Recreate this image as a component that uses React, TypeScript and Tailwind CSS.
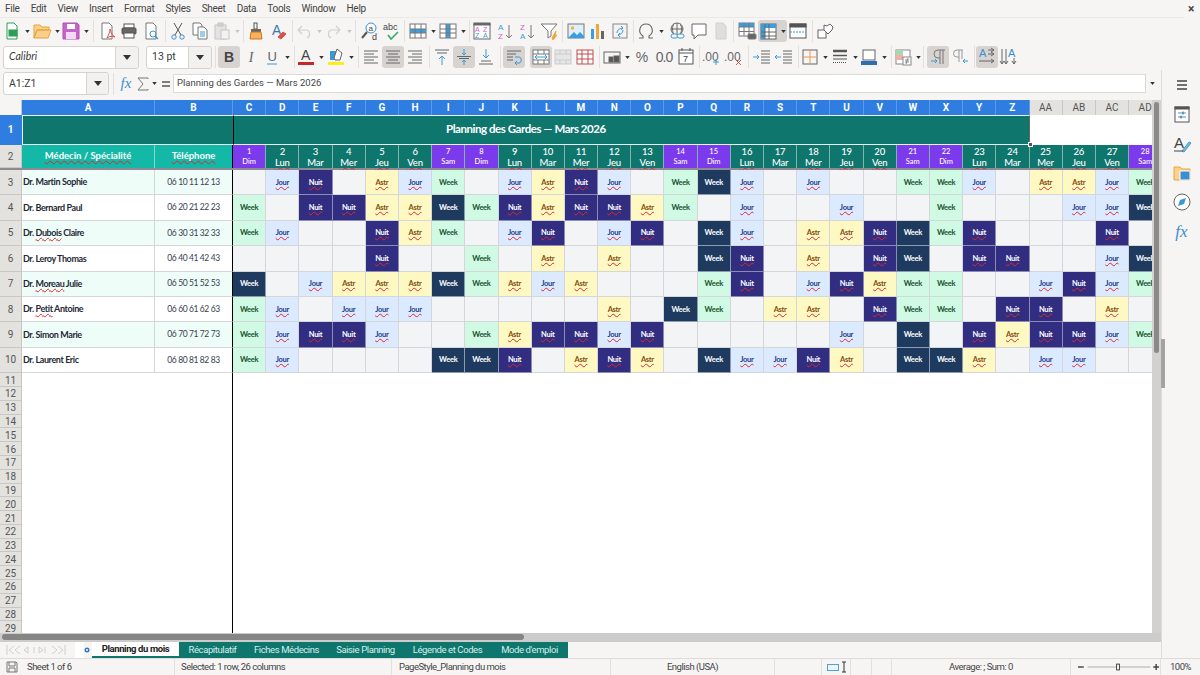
import React from "react";

const S = ({ children, c = "#555" }: { children?: React.ReactNode; c?: string }) => (
  <svg width="22" height="22" viewBox="0 0 22 22" fill="none" stroke={c} strokeWidth="1">{children}</svg>
);
const T = ({ x, y, s, f, w, children, i }: any) => (
  <text x={x} y={y} fontSize={s} fill={f} stroke="none" fontWeight={w} fontStyle={i ? "italic" : undefined} fontFamily="'Liberation Sans',sans-serif">{children}</text>
);
const B = ({ children, a, m }: { children?: React.ReactNode; a?: boolean; m?: string }) => (
  <div className={`w-[22px] h-[22px] shrink-0 rounded-[3px] flex items-center justify-center ${a ? "bg-[#d6d3d0]" : ""} ${m || ""}`}>{children}</div>
);
const D = ({ m, g }: { m?: string; g?: boolean }) => (
  <div className={`w-[8px] h-[22px] shrink-0 flex items-center justify-center ${m || ""}`}>
    <svg width="5" height="3" viewBox="0 0 6 4"><path d="M0 0h6L3 4z" fill={g ? "#c4c4c4" : "#333"} /></svg>
  </div>
);
const Sep = ({ m }: { m?: string }) => <div className={`w-px h-[22px] shrink-0 bg-[#e2e0dd] ${m || ""}`} />;

const doc = "M6 3h7l3 3v13H6z";
const Lines = ({ d }: { d: string }) => <path d={d} stroke="#666" />;

const Row1 = () => (
  <div className="h-[26px] flex items-center pl-px">
    <B><S c="#2e9e5b"><path d={doc} fill="#fff" /><rect x="8" y="10" width="8" height="6" fill="#2e9e5b" /></S></B><D />
    <B><S c="#e8a33d"><path d="M3 7V5h6l2 2h7v3H6l-3 8V7zM6 10h14l-3 8H3z" fill="#fbd08a" /></S></B><D m="-mr-px" />
    <B><S c="#b44fb8"><path d="M3 3h14l2 2v14H3z" fill="#c665c9" /><rect x="7" y="4" width="8" height="5" fill="#fff" stroke="none" /><rect x="6" y="12" width="10" height="7" fill="#f3d9f4" stroke="none" /></S></B><D />
    <Sep m="ml-[3px]" />
    <B m="ml-[2px]"><S c="#777"><path d={doc} fill="#fff" /><path d="M11 18c2-4 3-6 3-9 1 4 2 6 5 8-3-1-5-1-8 1z" stroke="#e0534a" /></S></B>
    <B><S c="#555"><rect x="6" y="4" width="10" height="4" fill="#fff" /><rect x="4" y="8" width="14" height="6" rx="1" fill="#666" /><rect x="6" y="13" width="10" height="5" fill="#fff" /></S></B>
    <B><S c="#777"><path d={doc} fill="#fff" /><circle cx="13" cy="14" r="3" stroke="#3b9ad6" /><path d="M15 16l3 3" stroke="#3b9ad6" strokeWidth="1.5" /></S></B>
    <Sep m="ml-[3px]" />
    <B m="ml-px"><S c="#3b8fd0"><circle cx="7" cy="17" r="2.2" /><circle cx="15" cy="17" r="2.2" /><path d="M8 15L15 3M14 15L7 3" stroke="#555" /></S></B>
    <B><S c="#777"><path d="M4 3h7l2 2v10H4z" fill="#fff" /><path d="M9 7h6l3 3v9H9z" fill="#fff" /><path d="M11 12h5M11 14h5M11 16h5" stroke="#3b9ad6" /></S></B>
    <B><S c="#c6c6c6"><rect x="4" y="5" width="11" height="14" fill="#e3e3e3" /><rect x="7" y="3" width="5" height="3" fill="#d0d0d0" /><rect x="10" y="10" width="8" height="9" fill="#f2f2f2" /></S></B><D g />
    <Sep m="ml-[2px]" />
    <B m="ml-px"><S c="#c9772a"><rect x="9" y="3" width="3" height="6" fill="#f5f5f5" stroke="#555" /><rect x="6" y="9" width="10" height="3" fill="#666" stroke="none" /><path d="M6 12h10l1 7H5z" fill="#f6b25c" /></S></B>
    <B><S><T x="5" y="15" s="14" f="#3a76b0" w="400">A</T><path d="M11 17l5-5 3 2-5 5z" fill="#e0504a" stroke="#e0504a" /></S></B>
    <Sep m="ml-[3px]" />
    <B><S c="#cfcfcf"><path d="M5 10l4-4M5 10l4 4M5 10h8c4 0 5 6 1 8" strokeWidth="1.2" /></S></B><D g />
    <B><S c="#cfcfcf"><path d="M17 10l-4-4M17 10l-4 4M17 10H9c-4 0-5 6-1 8" strokeWidth="1.2" /></S></B><D g />
    <Sep m="ml-[2px]" />
    <B m="ml-[3px]"><S><circle cx="12" cy="8" r="5" fill="#fff" stroke="#3b8fd0" /><T x="9.5" y="11" s="8" f="#444">a</T><path d="M8 12l-5 6" strokeWidth="2" /><T x="13" y="20" s="9" f="#444">d</T></S></B>
    <B><S><T x="2" y="10" s="9" f="#444">abc</T><path d="M7 15l3 4 7-7" stroke="#35a868" strokeWidth="1.5" /></S></B>
    <Sep m="ml-px" />
    <B m="ml-[2px]"><S c="#777"><rect x="3" y="4" width="16" height="14" fill="#fff" /><rect x="3" y="9" width="16" height="4" fill="#3b9ee0" stroke="none" /><path d="M3 9h16M3 13h16M8 4v14M14 4v14" /></S></B><D />
    <B><S c="#777"><rect x="3" y="4" width="16" height="14" fill="#fff" /><rect x="9" y="4" width="4" height="14" fill="#3b9ee0" stroke="none" /><path d="M3 9h16M3 13h16M9 4v14M13 4v14" /></S></B><D />
    <Sep m="ml-[2px]" />
    <B m="ml-px"><S c="#666"><rect x="3" y="4" width="16" height="15" fill="#fff" /><rect x="3" y="3" width="16" height="2" fill="#666" /><T x="4" y="12" s="7" f="#d45bc9">A</T><T x="12" y="12" s="7" f="#d45bc9">Z</T><T x="4" y="18" s="7" f="#3b9ad6">Z</T><T x="12" y="18" s="7" f="#3b9ad6">A</T></S></B>
    <B m="ml-px"><S c="#777"><T x="4" y="10" s="8" f="#3b9ad6">A</T><T x="4" y="19" s="8" f="#d45bc9">Z</T><path d="M15 5v13M12 15l3 3 3-3" /></S></B>
    <B><S c="#777"><T x="4" y="10" s="8" f="#d45bc9">Z</T><T x="4" y="19" s="8" f="#3b9ad6">A</T><path d="M15 5v13M12 15l3 3 3-3" /></S></B>
    <B><S c="#777"><path d="M3 4h16l-6 7v5l-3 2v-7z" fill="#fff" /><path d="M14 18l4-7-1 5 2-1-4 5z" fill="#f0a63a" stroke="#f0a63a" /></S></B>
    <Sep m="ml-[2px]" />
    <B m="ml-[2px]"><S c="#777"><rect x="3" y="4" width="16" height="14" fill="#dff0fb" /><circle cx="7.5" cy="8" r="1.7" fill="#f5b048" stroke="none" /><path d="M3 18l6-6 3 3 3-3 4 4v2z" fill="#3b9ee0" stroke="none" /></S></B>
    <B><S><rect x="4" y="9" width="3" height="10" fill="#3b9ee0" stroke="none" /><rect x="9" y="4" width="3" height="15" fill="#f0a63a" stroke="none" /><rect x="14" y="11" width="3" height="8" fill="#666" stroke="none" /></S></B>
    <B><S c="#888"><rect x="4" y="4" width="14" height="14" fill="#f3f3f3" /><path d="M8 13c0-3 3-5 6-5M14 8l-2-2M14 8l-2 2M14 10c0 3-3 5-5 5M9 15l2-2M9 15l2 2" stroke="#3b9ad6" /></S></B>
    <Sep m="ml-[2px]" />
    <B m="ml-px"><S c="#666"><path d="M4 18h4v-2c-6-4-3-12 3-12s9 8 3 12v2h4" strokeWidth="1.1" /></S></B><D />
    <B m="ml-px"><S c="#666"><circle cx="11" cy="9" r="6" /><path d="M5 9h12M11 3v12M8 3.500c-2 3-2 8 0 11M14 3.500c2 3 2 8 0 11" /><rect x="5" y="14" width="7" height="4" rx="2" fill="#f6f5f4" stroke="#3b9ad6" /><rect x="11" y="14" width="7" height="4" rx="2" fill="#f6f5f4" stroke="#3b9ad6" /></S></B>
    <B><S c="#666"><path d="M4 4h14v11h-8l-4 4v-4H4z" fill="#fff" /></S></B>
    <B><S c="#d0d0d0"><path d="M6 3h7l3 3v13H6z" fill="#dedede" /></S></B>
    <Sep m="ml-px" />
    <B m="ml-[2px]"><S c="#777"><rect x="3" y="3" width="15" height="13" fill="#fff" /><rect x="3" y="3" width="15" height="4" fill="#3b9ee0" stroke="none" /><path d="M3 7h15M3 11.500h15M8 3v13M13 3v13" /><rect x="12" y="14" width="8" height="5" rx="1" fill="#666" /></S></B>
    <div className="flex rounded-[3px] bg-[#d6d3d0] w-[29px] shrink-0">
      <B><S c="#666"><rect x="3" y="4" width="15" height="15" fill="#fff" /><rect x="3" y="4" width="15" height="4" fill="#3b9ee0" stroke="none" /><rect x="3" y="4" width="4" height="15" fill="#3b9ee0" stroke="none" /><path d="M3 12h15M3 16h15M11 4v15M7 4v15" /></S></B>
      <D m="-ml-px" />
    </div>
    <B><S c="#555"><rect x="3" y="4" width="16" height="14" fill="#fff" /><rect x="3" y="4" width="16" height="3" fill="#555" /><path d="M3 12h16" stroke="#3b9ee0" strokeDasharray="2 1" /></S></B>
    <Sep m="ml-[3px]" />
    <B m="ml-[2px]"><S c="#666"><rect x="3" y="10" width="8" height="8" fill="#fff" /><path d="M9 5l3 1 3-2 3 3-1 3-4 4-4-4z" fill="#fff" /></S></B>
  </div>
);

const FontBox = ({ w, dd, children }: any) => (
  <div className={`${w} h-[23px] shrink-0 flex rounded-[3px] border border-[#d5d3d0] bg-white`}>
    <div className="flex-1 flex items-center pl-[5px] text-[10.500px] text-[#3a3a3a]">{children}</div>
    <div className={`${dd} bg-[#f2f1ef] border-l border-[#d5d3d0] flex items-center justify-center rounded-r-[3px]`}>
      <svg width="8" height="5" viewBox="0 0 8 5"><path d="M0 0h8L4 5z" fill="#333" /></svg>
    </div>
  </div>
);

const Row2 = () => (
  <div className="h-[26px] flex items-center pl-[3px]">
    <FontBox w="w-[136px]" dd="w-[23px]"><span className="italic font-['Lato',sans-serif] text-[10.500px]">Calibri</span></FontBox>
    <FontBox w="w-[66px] ml-[7px]" dd="w-[23px]">13 pt</FontBox>
    <Sep m="ml-[3px]" />
    <B a m="ml-[2px]"><span className="text-[14px] font-bold text-[#444] font-['Liberation_Sans',sans-serif]">B</span></B>
    <B><span className="text-[14px] italic text-[#666] font-['Liberation_Serif',serif]">I</span></B>
    <B m="-ml-px"><S><T x="6.500" y="15" s="13" f="#666">U</T><path d="M6 18h10" stroke="#3b9ad6" /></S></B><D />
    <Sep m="ml-[3px]" />
    <B><S><T x="6" y="14" s="14" f="#444">A</T><rect x="3" y="16" width="16" height="3" fill="#c7262b" stroke="none" /></S></B><D />
    <B><S c="#666"><rect x="3" y="16" width="16" height="3" fill="#f6f01e" stroke="none" /><path d="M5 5h6v9H5z" fill="#3b9ad6" stroke="none" /><path d="M9 12l3-9 5 4-2 7h-5z" fill="#fff" /></S></B><D />
    <Sep m="ml-[3px]" />
    <B m="ml-px"><S><Lines d="M4 5h14M4 8h10M4 11h14M4 14h10M4 17h14" /></S></B>
    <B a><S><Lines d="M4 5h14M6 8h10M4 11h14M6 14h10M4 17h14" /></S></B>
    <B><S><Lines d="M4 5h14M8 8h10M4 11h14M8 14h10M4 17h14" /></S></B>
    <Sep m="ml-[3px]" />
    <B m="ml-px"><S c="#666"><path d="M4 4h14M6 7h10" /><path d="M11 19v-9M8 13l3-3 3 3" stroke="#3b9ad6" /></S></B>
    <B a><S c="#666"><path d="M4 10.500h14M6 12.500h10" /><path d="M11 3v6M9 7l2 2 2-2M11 19v-5M9 16l2-2 2 2" stroke="#3b9ad6" /></S></B>
    <B><S c="#666"><path d="M4 18h14M6 15h10" /><path d="M11 3v9M8 9l3 3 3-3" stroke="#3b9ad6" /></S></B>
    <Sep m="ml-[3px]" />
    <B a m="ml-[2px]"><S c="#666"><Lines d="M4 5h14M4 8h9M4 11h6M4 14h6" /><path d="M12 11h4c3 0 3 6 0 6h-3M14 15l-2 2 2 2" stroke="#3b9ad6" /></S></B>
    <B a m="ml-[5px]"><S c="#777"><rect x="3" y="4" width="16" height="14" fill="#fff" /><path d="M3 8h16M3 14h16M8 4v4M14 4v4M8 14v4M14 14v4" /><path d="M5 11h12M5 11l2-2M5 11l2 2M17 11l-2-2M17 11l-2 2" stroke="#3b9ad6" /></S></B>
    <B><S c="#cbcbcb"><rect x="3" y="4" width="16" height="14" fill="#e6e6e6" /><path d="M3 8h16M3 14h16M8 4v4M14 4v4M8 14v4M14 14v4" /></S></B>
    <B><S c="#c34a4a"><rect x="3" y="4" width="16" height="14" fill="#fff" /><path d="M3 8h16M3 13h16M8 4v14M14 4v14" /></S></B>
    <Sep m="ml-[3px]" />
    <B m="ml-px"><S c="#666"><rect x="3" y="6" width="16" height="11" /><rect x="8" y="11" width="4" height="5" fill="#555" /><rect x="13" y="10" width="5" height="6" fill="#555" /></S></B><D />
    <B><span className="text-[14px] text-[#666] font-['Liberation_Sans',sans-serif]">%</span></B>
    <B><span className="text-[14px] tracking-[-1px] text-[#666] font-['Liberation_Sans',sans-serif]">0.0</span></B>
    <B><S c="#555"><rect x="4" y="4" width="14" height="14" fill="#fff" /><path d="M7 2v3M15 2v3M4 7h14" /><T x="8" y="16" s="9" f="#444">7</T></S></B>
    <Sep m="ml-[2px]" />
    <B m="ml-px"><S><T x="1" y="15" s="12" f="#666">.00</T><path d="M15 19v-6M12 16h6" stroke="#3b9ad6" /></S></B>
    <B><S><T x="1" y="15" s="12" f="#666">.00</T><path d="M13 14l5 5M18 14l-5 5" stroke="#e0504a" /></S></B>
    <Sep m="ml-[3px]" />
    <B m="ml-[2px]"><S c="#666"><path d="M10 5h9M10 8h9M10 11h9M10 14h9M10 17h9" /><path d="M2 11h6M6 9l2 2-2 2" stroke="#3b9ad6" /></S></B>
    <B><S c="#666"><path d="M10 5h9M10 8h9M10 11h9M10 14h9M10 17h9" /><path d="M8 11H2M4 9l-2 2 2 2" stroke="#3b9ad6" /></S></B>
    <Sep m="ml-[3px]" />
    <B><S c="#666"><rect x="4" y="4" width="14" height="14" /><path d="M11 4v14" stroke="#e39a52" /><path d="M4 11h14" stroke="#e39a52" /></S></B><D />
    <B><S c="#555"><path d="M4 5h14" strokeWidth="2.500" /><path d="M4 9.500h14" strokeWidth="1.500" /><path d="M4 13h14" /><path d="M4 16.500h14" strokeDasharray="1 1" /></S></B><D />
    <B m="-ml-px"><S c="#666"><rect x="5" y="4" width="12" height="10" fill="#fff" /><rect x="3" y="15" width="16" height="4" fill="#2f6fb0" stroke="none" /></S></B><D />
    <Sep m="ml-[3px]" />
    <B><S c="#888"><rect x="4" y="4" width="14" height="14" fill="#fff" /><rect x="4" y="4" width="7" height="5" fill="#a6d8b0" stroke="none" /><rect x="4" y="9" width="7" height="5" fill="#eeb0a8" stroke="none" /><rect x="11" y="11" width="8" height="8" fill="#fff" /><path d="M13 14h4M13 16h4M16 12l-2 6" /></S></B><D />
    <Sep m="ml-px" />
    <B a m="ml-[3px]"><S c="#777"><path d="M18 4h-7a4 4 0 000 8h2M13 4v14M16 4v14" /><path d="M4 15h6M8 13l2 2-2 2" stroke="#3b9ad6" /></S></B>
    <B><S c="#999"><path d="M14 4H8a3 3 0 000 7h2M10 4v12M13 4v9" /><path d="M19 15h-5M16 13l-2 2 2 2" stroke="#3b9ad6" /></S></B>
    <Sep m="ml-[3px]" />
    <B a m="ml-px"><S c="#666"><T x="3" y="11" s="11" f="#3b8fd0">A</T><path d="M12 4h6M15 2l3 2-3 2M12 8h6M15 6l3 2-3 2M3 15h15M15 13l3 2-3 2" /></S></B>
    <B><S c="#666"><T x="10" y="11" s="11" f="#3b8fd0">A</T><path d="M4 3v15M2 15l2 3 2-3M8 3v15M6 15l2 3 2-3M16 12v6M14 15l2 3 2-3" /></S></B>
  </div>
);

const Sidebar = () => (
  <div className="w-[38px] h-full flex flex-col items-center shrink-0 pl-[1px]">
    <div className="mt-[4px] h-[22px] flex items-center"><svg width="14" height="12" viewBox="0 0 14 12" stroke="#444" strokeWidth="1.500"><path d="M2 2h10M2 6h10M2 10h10" /></svg></div>
    <div className="mt-[8px] flex flex-col gap-[7px]">
      <B><S c="#555"><rect x="4" y="3" width="14" height="15" fill="#fff" /><rect x="4" y="3" width="14" height="2" fill="#555" /><path d="M7 9h8M7 13h8" stroke="#3b9ad6" /><path d="M12 7.500v3M10 11.500v3" stroke="#555" /></S></B>
      <B><S c="#3b9ad6"><T x="3" y="15" s="15" f="#444">A</T><path d="M11 18l7-9 2 1-7 9z" fill="#7fb8df" /><path d="M3 18h9" stroke="#444" /></S></B>
      <B><S c="#e8a33d"><path d="M3 18V5h6l2 2h8v11z" fill="#fbd08a" /><rect x="9" y="9" width="10" height="9" fill="#3b8fd0" stroke="#fff" /></S></B>
      <B><S c="#666"><circle cx="11" cy="11" r="8" fill="#fff" /><path d="M15 7l-6 2-2 6 6-2z" fill="#3b9ad6" stroke="none" /></S></B>
      <B><span className="text-[17px] leading-none italic text-[#3b8fd0] font-['Liberation_Serif',serif]">fx</span></B>
    </div>
  </div>
);

const FormulaBar = () => (
  <div className="h-[30px] shrink-0 flex items-center pl-[3px] pb-[3px]">
    <FontBox w="w-[106px]" dd="w-[22px]">A1:Z1</FontBox>
    <Sep m="ml-[4px]" />
    <B m="ml-px"><span className="text-[15px] italic leading-none text-[#3b8fd0] font-['Liberation_Serif',serif]">fx</span></B>
    <div className="w-[16px] flex justify-center shrink-0 -ml-[2px]"><svg width="12" height="14" viewBox="0 0 12 14" fill="none" stroke="#777"><path d="M11 2V1H1l5 6-5 6h10v-1" /></svg></div>
    <D m="-ml-px" />
    <div className="w-[14px] ml-[1px] shrink-0 flex justify-center"><svg width="10" height="8" viewBox="0 0 10 8" stroke="#555" strokeWidth="1.500"><path d="M1 2h8M1 6h8" /></svg></div>
    <div className="w-[973px] h-[19px] bg-white border border-[#dcdad7] flex items-center pl-[3px] text-[9.500px] text-[#444] shrink-0">Planning des Gardes — Mars 2026</div>
    <D m="ml-[2px]" />
  </div>
);

const letters = "CDEFGHIJKLMNOPQRSTUVWXYZ".split("");
const extra = ["AA", "AB", "AC", "AD"];
const dayNames = ["Dim", "Lun", "Mar", "Mer", "Jeu", "Ven", "Sam"];
const lato = "font-['Lato',sans-serif]";

const people: [string, string, string][] = [
  ["Dr. ", "Martin Sophie", "06 10 11 12 13"],
  ["Dr. ", "Bernard Paul", "06 20 21 22 23"],
  ["Dr. ", "Dubois|Claire", "06 30 31 32 33"],
  ["Dr. ", "Leroy Thomas", "06 40 41 42 43"],
  ["Dr. ", "Moreau|Julie", "06 50 51 52 53"],
  ["Dr. ", "Petit|Antoine", "06 60 61 62 63"],
  ["Dr. ", "Simon Marie", "06 70 71 72 73"],
  ["Dr. ", "Laurent Eric", "06 80 81 82 83"],
];
const grid = [
  "-JN-AJW-JANJ-WKJ-J--WWJ-AAJW",
  "W-NNAAKWNANNAW-J--J--W---JJK",
  "WJ--NAW-JN-JN-KJ-AANKWN---N-",
  "----N--W-A-A--KN-A-NK-NN--JK",
  "K-JAAAKWAJA---WN-JNAWW--JNJW",
  "WJ-JJJ-----A-KW-AA-NWW-NN-A-",
  "WJNNJ--WANNJN-----J-K-NANNJW",
  "WJ----KKN-ANA-KJJNA-KKA-JJ--",
];
const wavy = "underline decoration-wavy decoration-[#e0262b] decoration-1 underline-offset-[1px]";
const styles: Record<string, string> = {
  "-": "bg-[#f3f4f6] border-[#d4d6d9]",
  J: "bg-[#dbeafe] text-[#1e3a8a] border-[#d4d6d9]",
  N: "bg-[#312e81] text-white border-[#8d8bb5]",
  A: "bg-[#fef9c3] text-[#854d0e] border-[#d4d6d9]",
  W: "bg-[#d1fae5] text-[#14532d] border-[#d4d6d9]",
  K: "bg-[#1e3a5f] text-white border-[#8d9bb0]",
};
const labels: Record<string, string> = { "-": "", J: "Jour", N: "Nuit", A: "Astr", W: "Week", K: "Week" };

const RowHead = ({ n, sel, h }: { n: number; sel?: boolean; h: string }) => (
  <div className={`w-[22px] ${h} shrink-0 flex items-center justify-center text-[10px] border-r border-b ${sel ? "bg-[#2f7de1] text-white font-bold border-[#2f7de1]" : "bg-[#e4e2df] text-[#555] border-[#c9c7c4]"}`}>{n}</div>
);

const Sheet = () => (
  <div className="w-[1152px] h-[533px] overflow-hidden bg-white flex flex-col shrink-0">
    {/* column header */}
    <div className="flex h-[15px] shrink-0 text-[10px] font-bold text-white">
      <div className="w-[22px] shrink-0 bg-[#f6f5f4] border-r border-[#c9c7c4]" />
      <div className="w-[133px] shrink-0 bg-[#2f7de1] border-r border-[#5c9aea] flex items-center justify-center">A</div>
      <div className="w-[78px] shrink-0 bg-[#2f7de1] border-r border-[#5c9aea] flex items-center justify-center">B</div>
      {letters.map((l) => (
        <div key={l} className="w-[33.200px] shrink-0 bg-[#2f7de1] border-r border-[#5c9aea] flex items-center justify-center">{l}</div>
      ))}
      {extra.map((l) => (
        <div key={l} className="w-[33.200px] shrink-0 bg-[#e4e2df] border-r border-[#c9c7c4] flex items-center justify-center text-[#555] font-normal">{l}</div>
      ))}
    </div>
    {/* row 1 */}
    <div className="flex h-[30px] shrink-0 relative">
      <RowHead n={1} sel h="h-[30px]" />
      <div className="w-[211px] shrink-0 bg-[#0f766e] border-t border-b border-l border-[#e8f3f1] border-r-black" />
      <div className="w-[797px] shrink-0 bg-[#0f766e] border-t border-b border-r border-[#e8f3f1] border-r-[#666] border-l border-l-black flex items-center pl-[212px] pb-[2px] text-[11.500px] tracking-[-0.45px] font-bold text-white">
        <span className={lato}>Planning des Gardes — Mars 2026</span>
      </div>
      <div className="flex-1 bg-white" />
      <div className="absolute left-[1028px] top-[27px] w-[5px] h-[5px] bg-[#555] border border-white z-10" />
    </div>
    {/* row 2 */}
    <div className="flex h-[25px] shrink-0 border-b-2 border-[#8d8a94]">
      <RowHead n={2} h="h-[23px]" />
      <div className={`w-[133px] shrink-0 bg-[#14b8a6] text-white text-[9.500px] font-bold border-r border-[#7fd9cf] flex items-center justify-center ${lato}`}><span className={wavy}>Médecin / Spécialité</span></div>
      <div className={`w-[78px] shrink-0 bg-[#14b8a6] text-white text-[9.500px] font-bold border-r border-black flex items-center justify-center ${lato}`}><span className={wavy}>Téléphone</span></div>
      {Array.from({ length: 28 }, (_, i) => {
        const name = dayNames[i % 7];
        const we = name === "Sam" || name === "Dim";
        const w = name === "Lun" || name === "Mer" || name === "Jeu" || name === "Ven";
        return (
          <div key={i} className={`w-[33.200px] shrink-0 border-r border-[#7fb5ae] text-white flex flex-col items-center justify-center font-medium ${lato} ${we ? "bg-[#7c3aed] text-[7.500px] leading-[10px] font-bold" : "bg-[#0f766e] text-[9.500px] leading-[11px] tracking-[-0.2px]"}`}>
            <span>{i + 1}</span>
            <span className={w ? wavy : ""}>{name}</span>
          </div>
        );
      })}
    </div>
    {/* rows 3-10 */}
    {people.map(([p, n, tel], r) => {
      const [wrong, rest] = n.includes("|") ? n.split("|") : ["", n];
      const bg = r % 2 === 0 ? "bg-[#effdf9]" : "bg-white";
      return (
        <div key={r} className="flex h-[25.400px] shrink-0">
          <RowHead n={r + 3} h="h-[25.400px]" />
          <div className={`w-[133px] shrink-0 border-r border-b border-[#d4d6d9] ${bg} flex items-center pl-[1px] text-[9px] tracking-[-0.4px] font-bold text-[#1f2937] ${lato}`}>
            <span>{p}{wrong && <span className={wavy}>{wrong}</span>}{wrong ? " " : ""}{rest}</span>
          </div>
          <div className={`w-[78px] shrink-0 border-r border-b border-b-[#d4d6d9] border-r-black ${bg} flex items-center justify-center text-[8.500px] tracking-[-0.4px] text-[#374151] ${lato}`}>{tel}</div>
          {grid[r].split("").map((c, i) => (
            <div key={i} className={`w-[33.200px] shrink-0 border-r border-b flex items-center justify-center text-[7.500px] tracking-[-0.3px] font-bold ${lato} ${styles[c]}`}>
              {c !== "-" && <span className={c === "J" || c === "N" || c === "A" ? wavy : ""}>{labels[c]}</span>}
            </div>
          ))}
        </div>
      );
    })}
    {/* rows 11-29 */}
    {Array.from({ length: 19 }, (_, i) => (
      <div key={i} className="flex h-[13.800px] shrink-0">
        <RowHead n={i + 11} h="h-[13.800px] pt-[1px]" />
        <div className="w-[211px] shrink-0 border-r border-black" />
      </div>
    ))}
  </div>
);

const tabs: [string, string][] = [
  ["Récapitulatif", "w-[67px]"],
  ["Fiches Médecins", "w-[81px]"],
  ["Saisie Planning", "w-[77px]"],
  ["Légende et Codes", "w-[87px]"],
  ["Mode d'emploi", "w-[77px]"],
];

const TabBar = () => (
  <div className="h-[16px] shrink-0 flex items-center text-[9.500px] tracking-[-0.4px]">
    <div className="w-[75px] pl-[6px] shrink-0 flex items-center">
      <svg width="60" height="12" viewBox="0 0 60 12" fill="none" stroke="#cfcfcf"><path d="M1 1v10M8 2L3 6l5 4M14 2L9 6l5 4M22 3l-4 3 4 3v-6zM28 3v6M33 3l4 3-4 3zM39 3v6M46 2l5 4-5 4M52 2l5 4-5 4M59 1v10" /></svg>
    </div>
    <div className="w-[9px] h-[16px] bg-white shrink-0" />
    <div className="w-[8px] h-[16px] shrink-0 flex items-center"><svg width="6" height="6" viewBox="0 0 6 6"><circle cx="3" cy="3" r="2.500" fill="#3b6fc9" /><circle cx="3" cy="3" r="1" fill="#fff" /></svg></div>
    <div className="w-[87px] h-[16px] shrink-0 bg-white border-b-2 border-[#0f766e] text-[#222] font-bold flex items-center justify-center">Planning du mois</div>
    <div className="h-[16px] flex bg-[#0f766e] text-[#d5efeb] shrink-0">
      {tabs.map(([t, w]) => (
        <div key={t} className={`h-[16px] flex items-center justify-center whitespace-nowrap ${w}`}>{t}</div>
      ))}
    </div>
  </div>
);

const StatusBar = () => (
  <div className="h-[17px] shrink-0 flex items-center text-[9.500px] tracking-[-0.5px] text-[#444] border-t border-[#dedcd9]">
    <div className="w-[175px] shrink-0 flex items-center pl-[5px] border-r border-[#e2e0dd] h-full">
      <svg width="14" height="14" viewBox="0 0 14 14" fill="none" stroke="#777"><path d="M2 2h9l1 1v9H2zM4 2v4h6V2M4 12V8h6v4" /></svg>
      <span className="ml-[8px]">Sheet 1 of 6</span>
    </div>
    <div className="w-[217px] shrink-0 pl-[6px] border-r border-[#e2e0dd] h-full flex items-center">Selected: 1 row, 26 columns</div>
    <div className="w-[219px] shrink-0 pl-[7px] border-r border-[#e2e0dd] h-full flex items-center">PageStyle_Planning du mois</div>
    <div className="w-[164px] shrink-0 border-r border-[#e2e0dd] h-full flex items-center justify-center">English (USA)</div>
    <div className="w-[47px] shrink-0 border-r border-[#e2e0dd] h-full" />
    <div className="w-[29px] shrink-0 border-r border-[#e2e0dd] h-full flex items-center pl-[5px]">
      <div className="w-[12px] h-[7px] border border-[#4da3d4] bg-[#eaf5fb]" />
      <svg width="6" height="12" viewBox="0 0 6 12" className="ml-[2px]" fill="none" stroke="#333"><path d="M1 1h4M3 1v10M1 11h4" /></svg>
    </div>
    <div className="w-[21px] shrink-0 border-r border-[#e2e0dd] h-full" />
    <div className="w-[20px] shrink-0 border-r border-[#e2e0dd] h-full" />
    <div className="w-[179px] shrink-0 border-r border-[#e2e0dd] h-full flex items-center justify-center">Average: ; Sum: 0</div>
    <div className="w-[90px] shrink-0 flex items-center h-full pl-[6px] border-r border-[#e2e0dd]">
      <svg width="86" height="10" viewBox="0 0 86 10" fill="none" stroke="#444"><path d="M1 5h6" strokeWidth="1.500" /><path d="M11 5h65" stroke="#aaa" /><rect x="41" y="2" width="3" height="6" fill="#f6f5f4" /><path d="M79 5h6M82 2v6" strokeWidth="1.500" /></svg>
    </div>
    <div className="flex-1 text-center">100%</div>
  </div>
);

export default function App() {
  return (
    <div className="w-[1200px] h-[675px] overflow-hidden bg-[#f6f5f4] flex flex-col font-['Roboto',sans-serif] text-[#333]">
      <div className="h-[17px] shrink-0 flex items-center justify-between pl-[5px] pr-[6px] text-[10px] tracking-[-0.27px] text-[#444]">
        <div className="flex gap-[11px]">
          {["File", "Edit", "View", "Insert", "Format", "Styles", "Sheet", "Data", "Tools", "Window", "Help"].map((m) => (
            <span key={m}>{m}</span>
          ))}
        </div>
        <span className="text-[12px] leading-none font-bold text-[#444]">×</span>
      </div>
      <div className="h-px w-[1184px] shrink-0 bg-[#ebe9e6]" />
      <Row1 />
      <Row2 />
      <div className="flex-1 flex min-h-0 relative">
        <div className="w-[1162px] shrink-0 flex flex-col border-r border-[#dedcd9]">
          <FormulaBar />
          <div className="flex h-[533px] shrink-0">
            <Sheet />
            <div className="flex-1 bg-[#d2d1cf] pt-[2px] pl-[2px]">
              <div className="w-[5px] h-[251px] rounded-full bg-[#8a8a8a]" />
            </div>
          </div>
          <div className="h-[9px] shrink-0 bg-[#cccccc] pl-[2px] py-[1px]">
            <div className="w-[522px] h-[6px] rounded-full bg-[#858585]" />
          </div>
          <TabBar />
        </div>
        <Sidebar />
        <div className="absolute left-[1161px] top-[269px] w-[4px] h-[49px] bg-[#a3a3a3]" />
      </div>
      <StatusBar />
    </div>
  );
}
